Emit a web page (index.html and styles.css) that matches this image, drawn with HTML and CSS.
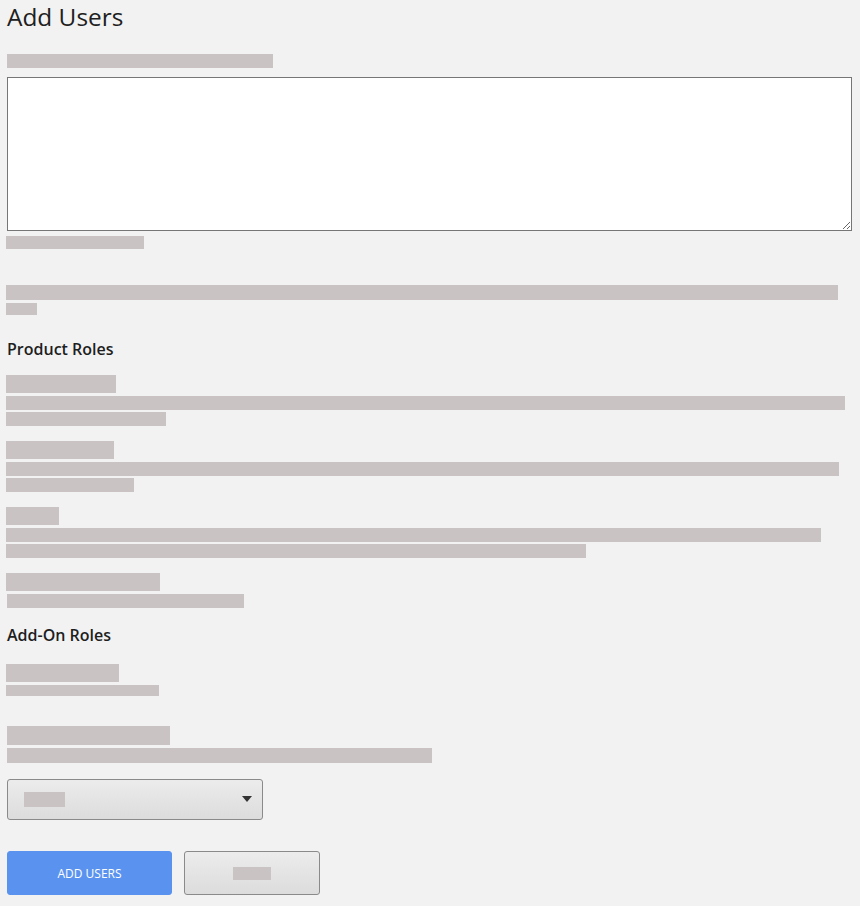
FILE: index.html
```html
<!DOCTYPE html>
<html>
<head>
<meta charset="utf-8">
<link rel="stylesheet" href="styles.css">
</head>
<body>
<main class="page">
  <h1 class="title">Add Users</h1>
  <div class="bar h14 ml1 mt21" style="width:266px"></div>
  <textarea class="emails"></textarea>
  <div class="bar h13 mt5" style="width:138px"></div>
  <div class="bar h15 mt36" style="width:832px"></div>
  <div class="bar h12 mt3" style="width:31px"></div>

  <h2 class="section product">Product Roles</h2>
  <div class="role first">
    <div class="bar label" style="width:110px"></div>
    <div class="bar desc" style="width:839px"></div>
    <div class="bar desc2" style="width:160px"></div>
  </div>
  <div class="role">
    <div class="bar label" style="width:108px"></div>
    <div class="bar desc" style="width:833px"></div>
    <div class="bar desc2" style="width:128px"></div>
  </div>
  <div class="role">
    <div class="bar label" style="width:53px"></div>
    <div class="bar desc" style="width:815px"></div>
    <div class="bar desc2" style="width:580px"></div>
  </div>
  <div class="role">
    <div class="bar label" style="width:154px"></div>
    <div class="bar desc ml1" style="width:237px"></div>
  </div>

  <h2 class="section addon">Add-On Roles</h2>
  <div class="role first-addon">
    <div class="bar label" style="width:113px"></div>
    <div class="bar desc small" style="width:153px"></div>
  </div>
  <div class="role second-addon">
    <div class="bar label tall ml1" style="width:163px"></div>
    <div class="bar desc big ml1" style="width:425px"></div>
  </div>

  <div class="select">
    <span class="bar sel-text"></span>
    <svg class="caret" width="10" height="6" viewBox="0 0 10 6"><path d="M0 0 L10 0 L5 6 Z" fill="#333"/></svg>
  </div>

  <div class="actions">
    <button class="btn primary">ADD USERS</button>
    <button class="btn secondary"><span class="bar btn-text"></span></button>
  </div>
</main>
</body>
</html>
```

FILE: styles.css
```css
html, body {
  margin: 0;
  padding: 0;
  background: #f2f2f2;
}
body {
  font-family: "Open Sans", "Noto Sans", "Liberation Sans", sans-serif;
  color: #1e1e1e;
}
.page {
  display: flex;
  flex-direction: column;
  align-items: flex-start;
  padding: 0 0 0 6px;
}
.title {
  margin: 1px 0 0 1px;
  font-size: 24.4px;
  line-height: 32px;
  font-weight: 400;
  color: #202020;
}
.bar {
  display: block;
  background: #c9c3c3;
}
.h12 { height: 12px; }
.h13 { height: 13px; }
.h14 { height: 14px; }
.h15 { height: 15px; }
.ml1 { margin-left: 1px; }
.mt3 { margin-top: 3px; }
.mt5 { margin-top: 5px; }
.mt21 { margin-top: 21px; }
.mt36 { margin-top: 36px; }

.emails {
  display: block;
  box-sizing: border-box;
  width: 845px;
  height: 154px;
  margin: 9px 0 0 1px;
  border: 1px solid #767676;
  background: #fff;
  padding: 2px;
}

.section {
  margin: 0 0 0 1px;
  font-size: 16px;
  line-height: 24px;
  font-weight: 600;
  color: #1e1e1e;
}
.section.product { margin-top: 22px; }
.section.addon { margin-top: 15px; }

.role {
  display: flex;
  flex-direction: column;
  align-items: flex-start;
  margin-top: 15px;
}
.role.first { margin-top: 14px; }
.role.first-addon { margin-top: 17px; }
.role.second-addon { margin-top: 30px; }
.role .label { height: 18px; }
.role .label.tall { height: 19px; }
.role .desc { height: 14px; margin-top: 3px; }
.role .desc.small { height: 11px; }
.role .desc.big { height: 15px; }
.role .desc2 { height: 14px; margin-top: 2px; }

.select {
  box-sizing: border-box;
  width: 256px;
  height: 41px;
  margin: 16px 0 0 1px;
  border: 1px solid #8a8a8a;
  border-radius: 3px;
  background: linear-gradient(#ececec, #dcdcdc);
  display: flex;
  align-items: center;
  justify-content: space-between;
  padding: 0 10px 0 16px;
}
.sel-text {
  width: 41px;
  height: 15px;
}
.caret { display: block; margin-top: -2px; }

.actions {
  display: flex;
  gap: 12px;
  margin: 31px 0 0 1px;
}
.btn {
  box-sizing: border-box;
  height: 44px;
  border-radius: 3px;
  font-family: inherit;
  font-size: 12px;
  display: flex;
  align-items: center;
  justify-content: center;
  padding: 0;
}
.btn.primary {
  width: 165px;
  background: #5a93ef;
  border: 1px solid #5a93ef;
  color: #fff;
}
.btn.secondary {
  width: 136px;
  background: linear-gradient(#ececec, #dcdcdc);
  border: 1px solid #8a8a8a;
}
.btn-text {
  width: 38px;
  height: 13px;
}
```
